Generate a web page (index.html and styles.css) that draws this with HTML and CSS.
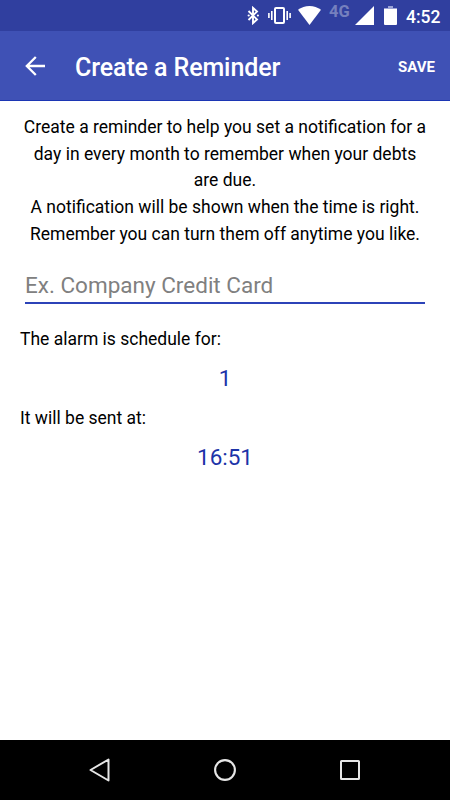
FILE: index.html
```html
<!DOCTYPE html>
<html lang="en">
<head>
  <meta charset="UTF-8">
  <meta name="viewport" content="width=device-width, initial-scale=1.0">
  <title>Create a Reminder</title>
  <link rel="stylesheet" href="styles.css">
</head>
<body>
  <div class="status-bar">
    <svg class="bluetooth" width="12" height="19" viewBox="0 0 12 19"><path d="M1.500 5l8.500 8.500-4 3.600V1.900L10 5.500 1.500 14" fill="none" stroke="#fff" stroke-width="1.900"/><circle cx="1.700" cy="9.500" r="1.100" fill="#fff"/><circle cx="10.900" cy="9.500" r="1.100" fill="#fff"/></svg>
    <svg class="vibrate" width="23" height="17" viewBox="0 0 23 17"><rect x="7" y="1" width="9" height="15" rx="1" fill="none" stroke="#fff" stroke-width="2"/><path d="M3.800 4v9M19.200 4v9M.9 6v5M22.100 6v5" stroke="#fff" stroke-width="1.600"/></svg>
    <svg class="wifi" width="23" height="19" viewBox="0 0 23 19"><path d="M11.500 19L0 3.800C3.300 1.300 7.300 0 11.500 0S19.700 1.300 23 3.800z" fill="#fff"/></svg>
    <span class="network">4G</span>
    <svg class="signal" width="19" height="19" viewBox="0 0 19 19"><path d="M0 19L19 0v19z" fill="#fff"/></svg>
    <svg class="battery" width="13" height="19" viewBox="0 0 13 19"><path d="M0 3V2h4V0h5v2h4v1z" fill="#9aa3d6"/><path d="M0 3h13v15q0 1-1 1H1q-1 0-1-1z" fill="#fff"/></svg>
    <span class="clock">4:52</span>
  </div>

  <div class="app-bar">
    <button class="back-button" aria-label="Back">
      <svg width="20" height="20" viewBox="0 0 20 20"><path d="M20 10H1.800M10.800 1L1.800 10l9 9" fill="none" stroke="#fff" stroke-width="2.300"/></svg>
    </button>
    <h1>Create a Reminder</h1>
    <button class="save-button">SAVE</button>
  </div>

  <div class="container">
    <p class="intro">Create a reminder to help you set a notification for a<br>day in every month to remember when your debts<br>are due.<br>A notification will be shown when the time is right.<br>Remember you can turn them off anytime you like.</p>
    <input type="text" class="name-input" placeholder="Ex. Company Credit Card">
    <p class="label">The alarm is schedule for:</p>
    <p class="value">1</p>
    <p class="label">It will be sent at:</p>
    <p class="value">16:51</p>
  </div>

  <div class="nav-bar">
    <svg width="24" height="24" viewBox="0 0 24 24"><path d="M20.500 1.500v21L2.500 12z" fill="none" stroke="#e6e6e6" stroke-width="2" stroke-linejoin="round"/></svg>
    <svg width="24" height="24" viewBox="0 0 24 24"><circle cx="12" cy="12" r="9.900" fill="none" stroke="#e6e6e6" stroke-width="2.100"/></svg>
    <svg width="24" height="24" viewBox="0 0 24 24"><rect x="3" y="3" width="18" height="18" rx=".5" fill="none" stroke="#e6e6e6" stroke-width="2"/></svg>
  </div>
</body>
</html>
```
FILE: styles.css
```css
* {
  box-sizing: border-box;
}
body {
  font-family: Roboto, sans-serif;
  background-color: #fff;
  color: #000;
  display: flex;
  flex-direction: column;
  height: 100vh;
  margin: 0;
}
h1, p {
  margin: 0;
}
button {
  background: none;
  border: none;
  padding: 0;
  color: #fff;
  font-family: inherit;
  cursor: pointer;
}
svg {
  display: block;
}
.status-bar {
  display: flex;
  justify-content: flex-end;
  height: 31px;
  padding: 6px 10px 0 0;
  background-color: #303f9f;
  color: #fff;
}
.vibrate {
  margin: 1px 0 0 9px;
}
.wifi {
  margin-left: 7px;
}
.network {
  width: 22px;
  margin: -3px 0 0 8px;
  color: #7680be;
  font-size: 16.5px;
  font-weight: 700;
  line-height: 18px;
}
.signal {
  margin-left: 4px;
}
.battery {
  margin-left: 10px;
}
.clock {
  width: 34px;
  margin-left: 9px;
  font-size: 17.5px;
  font-weight: 500;
  line-height: 22px;
  white-space: nowrap;
}
.app-bar {
  display: flex;
  align-items: center;
  height: 70px;
  padding: 0 15px 0 25px;
  background-color: #3f51b5;
  border-bottom: 1px solid #1c36b4;
  color: #fff;
}
.back-button {
  width: 50px;
}
h1 {
  flex: 1;
  padding-top: 4px;
  font-size: 25px;
  font-weight: 500;
  line-height: 30px;
  letter-spacing: -0.1px;
}
.save-button {
  padding-top: 2px;
  font-size: 15px;
  font-weight: 700;
}
.container {
  flex: 1;
  display: flex;
  flex-direction: column;
  padding: 13px 20px 0;
}
.intro {
  font-size: 17.5px;
  line-height: 26.7px;
  text-align: center;
}
.name-input {
  height: 35px;
  margin: 21.5px 5px 0;
  padding: 0 0 1px;
  border: none;
  border-bottom: 2px solid #2c43b8;
  outline: none;
  font-family: inherit;
  font-size: 22.5px;
}
.name-input::placeholder {
  color: #808080;
}
.label {
  margin-top: 22px;
  font-size: 17.5px;
  line-height: 27px;
}
.value {
  margin-top: 10px;
  color: #1c33a8;
  font-size: 22.5px;
  line-height: 30px;
  text-align: center;
}
.value + .label {
  margin-top: 12px;
}
.nav-bar {
  display: flex;
  justify-content: center;
  align-items: center;
  gap: 101px;
  height: 60px;
  background-color: #000;
}
```
